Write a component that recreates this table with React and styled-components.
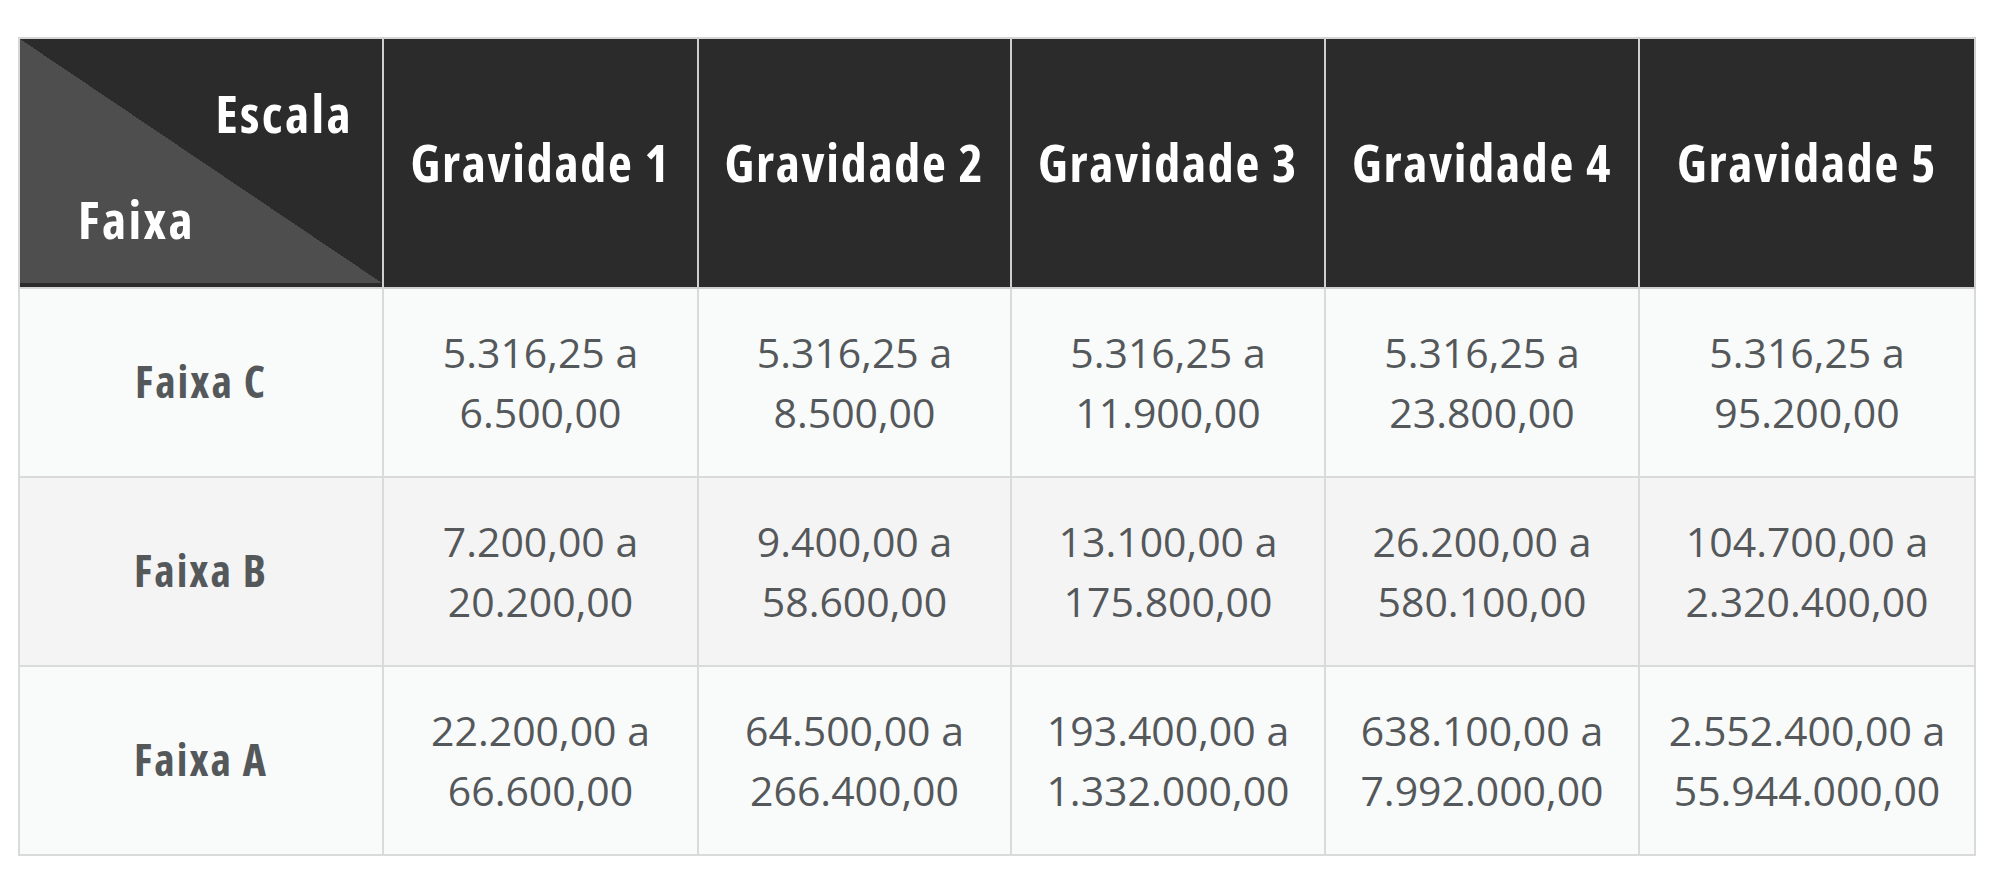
import React from "react";
import styled, { createGlobalStyle } from "styled-components";

const GlobalStyle = createGlobalStyle`
  html, body { margin: 0; padding: 0; background: #ffffff; }
  body { font-family: "Open Sans", "Noto Sans", sans-serif; }
`;

const Page = styled.div`
  padding: 37px 0 0 18px;
`;

const Table = styled.table`
  border-collapse: collapse;
  table-layout: fixed;
  width: 1956px;
  font-family: "Open Sans", "Noto Sans", sans-serif;
`;

const HeadRow = styled.tr`
  height: 250px;
  background: #2b2b2b;
`;

const HeadCell = styled.th`
  border: 2px solid #cfcfcf;
  border-top-color: #d6d6d6;
  color: #ffffff;
  font-size: 52px;
  font-weight: 700;
  font-stretch: 75%;
  letter-spacing: 1.7px;
  text-align: center;
  vertical-align: middle;
  padding: 0 0 4px;
  white-space: nowrap;
`;

const DiagonalCell = styled.th`
  border: 2px solid #d6d6d6;
  border-right-color: #cfcfcf;
  padding: 0;
  background-color: #2b2b2b;
  background-image: linear-gradient(to top right, #4e4e4e 50%, #2b2b2b 50%);
  background-size: 100% calc(100% - 4px);
  background-repeat: no-repeat;
  color: #ffffff;
  font-size: 52px;
  font-weight: 700;
  font-stretch: 75%;
  letter-spacing: 2.4px;
`;

const DiagInner = styled.div`
  display: flex;
  flex-direction: column;
  justify-content: space-between;
  height: 246px;
  box-sizing: border-box;
  padding: 43px 29px 37px 58px;
  line-height: 60px;
`;

const DiagTop = styled.span`
  align-self: flex-end;
`;

const DiagBottom = styled.span`
  align-self: flex-start;
`;

const BodyRow = styled.tr`
  height: 189px;
  background: ${(p) => (p.$alt ? "#f4f4f4" : "#f8fbfa")};
`;

const LabelCell = styled.td`
  border: 2px solid #dadada;
  color: #55585b;
  font-size: 44px;
  font-weight: 700;
  font-stretch: 75%;
  letter-spacing: 2px;
  text-align: center;
  vertical-align: middle;
  padding: 0 0 3px;
  white-space: nowrap;
`;

const ValueCell = styled.td`
  border: 2px solid #dadada;
  color: #55585b;
  font-size: 41px;
  font-weight: 400;
  font-stretch: 100%;
  line-height: 60px;
  text-align: center;
  vertical-align: middle;
  padding: 0 0 2px;
`;

const Line = styled.div`
  white-space: nowrap;
`;

const widths = [364, 315, 313, 314, 314, 336];

const rows = [
  {
    label: "Faixa C",
    values: [
      ["5.316,25 a", "6.500,00"],
      ["5.316,25 a", "8.500,00"],
      ["5.316,25 a", "11.900,00"],
      ["5.316,25 a", "23.800,00"],
      ["5.316,25 a", "95.200,00"],
    ],
  },
  {
    label: "Faixa B",
    values: [
      ["7.200,00 a", "20.200,00"],
      ["9.400,00 a", "58.600,00"],
      ["13.100,00 a", "175.800,00"],
      ["26.200,00 a", "580.100,00"],
      ["104.700,00 a", "2.320.400,00"],
    ],
  },
  {
    label: "Faixa A",
    values: [
      ["22.200,00 a", "66.600,00"],
      ["64.500,00 a", "266.400,00"],
      ["193.400,00 a", "1.332.000,00"],
      ["638.100,00 a", "7.992.000,00"],
      ["2.552.400,00 a", "55.944.000,00"],
    ],
  },
];

export default function App() {
  return (
    <Page>
      <GlobalStyle />
      <Table>
        <colgroup>
          {widths.map((w, i) => (
            <col key={i} style={{ width: w }} />
          ))}
        </colgroup>
        <thead>
          <HeadRow>
            <DiagonalCell>
              <DiagInner>
                <DiagTop>Escala</DiagTop>
                <DiagBottom>Faixa</DiagBottom>
              </DiagInner>
            </DiagonalCell>
            {[1, 2, 3, 4, 5].map((n) => (
              <HeadCell key={n}>Gravidade {n}</HeadCell>
            ))}
          </HeadRow>
        </thead>
        <tbody>
          {rows.map((r, i) => (
            <BodyRow key={r.label} $alt={i === 1}>
              <LabelCell>{r.label}</LabelCell>
              {r.values.map((v, j) => (
                <ValueCell key={j}>
                  <Line>{v[0]}</Line>
                  <Line>{v[1]}</Line>
                </ValueCell>
              ))}
            </BodyRow>
          ))}
        </tbody>
      </Table>
    </Page>
  );
}
